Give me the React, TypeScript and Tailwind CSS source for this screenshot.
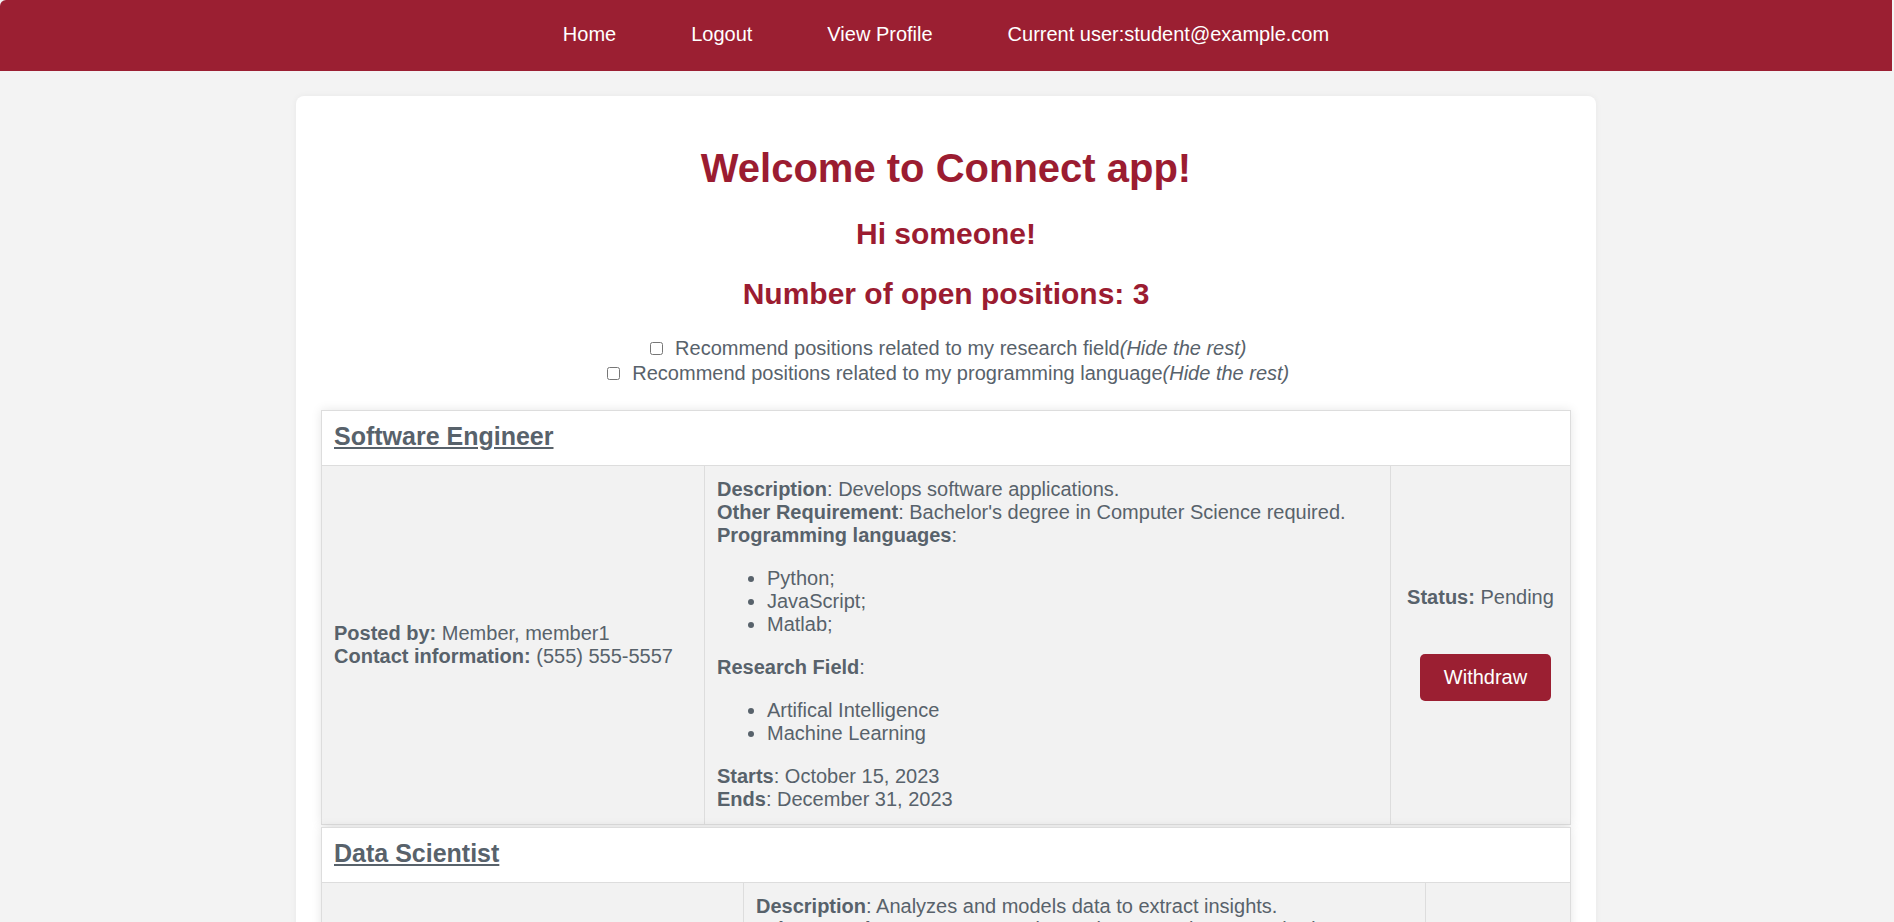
import React from "react";

const TEXT = "text-[#58626b]";

function Position(props: {
  title: string;
  widths: [string, string, string];
  posted: string;
  contact: string;
  description: string;
  other: string;
  langs: string[];
  fields: string[];
  starts: string;
  ends: string;
  status?: string;
  button: string;
}) {
  return (
    <div className="border border-[#dddddd] shadow-[0_0_10px_rgba(0,0,0,0.1)]">
      <div className="bg-white px-[12px] pt-[12px] pb-[12px] border-b border-[#dddddd]">
        <a href="#" className="text-[25px] leading-[27px] font-bold underline">
          {props.title}
        </a>
      </div>
      <div className="flex bg-[#f2f2f2] leading-[23px]">
        <div className={`${props.widths[0]} shrink-0 border-r border-[#dddddd] p-[12px] flex flex-col justify-center`}>
          <div>
            <b>Posted by:</b> {props.posted}
          </div>
          <div>
            <b>Contact information:</b> {props.contact}
          </div>
        </div>
        <div className={`${props.widths[1]} shrink-0 border-r border-[#dddddd] px-[12px] pt-[12px] pb-[13px]`}>
          <div>
            <b>Description</b>: {props.description}
          </div>
          <div>
            <b>Other Requirement</b>: {props.other}
          </div>
          <div>
            <b>Programming languages</b>:
          </div>
          <ul className="list-disc pl-[50px] my-[20px]">
            {props.langs.map((l) => (
              <li key={l}>{l};</li>
            ))}
          </ul>
          <div>
            <b>Research Field</b>:
          </div>
          <ul className="list-disc pl-[50px] my-[20px]">
            {props.fields.map((f) => (
              <li key={f}>{f}</li>
            ))}
          </ul>
          <div>
            <b>Starts</b>: {props.starts}
          </div>
          <div>
            <b>Ends</b>: {props.ends}
          </div>
        </div>
        <div className="flex-1 min-w-0 px-[12px] pt-[8px] pb-[12px] flex flex-col items-center justify-center text-center">
          {props.status && (
            <div>
              <b>Status:</b> {props.status}
            </div>
          )}
          <button className="mt-[45px] ml-[10px] bg-[#9b1f32] text-white rounded-[5px] px-[24px] py-[12px] leading-[23px] text-[20px]">
            {props.button}
          </button>
        </div>
      </div>
    </div>
  );
}

export default function App() {
  return (
    <div
      className={`min-h-screen bg-[#f3f3f3] text-[20px] ${TEXT}`}
      style={{ fontFamily: '"Liberation Sans", Arial, sans-serif' }}
    >
      <div className="mr-[2px]">
        <nav className="h-[71px] pb-[3px] bg-[#9b1f32] rounded-tl-[6px] flex items-center justify-center gap-[75px] text-white text-[20px]">
          <a href="#">Home</a>
          <a href="#">Logout</a>
          <a href="#">View Profile</a>
          <span>Current user:student@example.com</span>
        </nav>
        <main className="pt-[25px] pb-[40px]">
          <div className="mx-auto w-[1300px] bg-white rounded-[8px] p-[25px] shadow-[0_0_6px_rgba(0,0,0,0.05)]">
            <h1 className="mt-[24px] text-[40px] leading-[46px] font-bold text-center text-[#9b1c31]">
              Welcome to Connect app!
            </h1>
            <h2 className="mt-[26px] text-[30px] leading-[34px] font-bold text-center text-[#9b1c31]">
              Hi someone!
            </h2>
            <h2 className="mt-[26px] text-[30px] leading-[34px] font-bold text-center text-[#9b1c31]">
              Number of open positions: 3
            </h2>
            <div className="mt-[25px] text-center leading-[25px]">
              <div>
                <input type="checkbox" className="ml-[4px] mr-[7px] w-[13px] h-[13px]" /> Recommend positions related to
                my research field<i>(Hide the rest)</i>
              </div>
              <div>
                <input type="checkbox" className="ml-[4px] mr-[7px] w-[13px] h-[13px]" /> Recommend positions related to
                my programming language<i>(Hide the rest)</i>
              </div>
            </div>
            <div className="mt-[24px] flex flex-col gap-[2px]">
              <Position
                title="Software Engineer"
                widths={["w-[383px]", "w-[686px]", ""]}
                posted="Member, member1"
                contact="(555) 555-5557"
                description="Develops software applications."
                other="Bachelor's degree in Computer Science required."
                langs={["Python", "JavaScript", "Matlab"]}
                fields={["Artifical Intelligence", "Machine Learning"]}
                starts="October 15, 2023"
                ends="December 31, 2023"
                status="Pending"
                button="Withdraw"
              />
              <Position
                title="Data Scientist"
                widths={["w-[422px]", "w-[682px]", ""]}
                posted="Member, member2"
                contact="member2@example.com (555) 555-5558"
                description="Analyzes and models data to extract insights."
                other="Master's degree in Data Science required."
                langs={["Python", "R", "SQL"]}
                fields={["Data Science", "Statistics"]}
                starts="November 1, 2023"
                ends="April 30, 2024"
                button="Apply"
              />
              <Position
                title="Research Assistant"
                widths={["w-[383px]", "w-[686px]", ""]}
                posted="Member, member3"
                contact="(555) 555-5559"
                description="Assists with ongoing research projects."
                other="Currently enrolled in a graduate program."
                langs={["Python", "C++"]}
                fields={["Computer Vision"]}
                starts="January 10, 2024"
                ends="May 31, 2024"
                button="Apply"
              />
            </div>
          </div>
        </main>
      </div>
    </div>
  );
}
